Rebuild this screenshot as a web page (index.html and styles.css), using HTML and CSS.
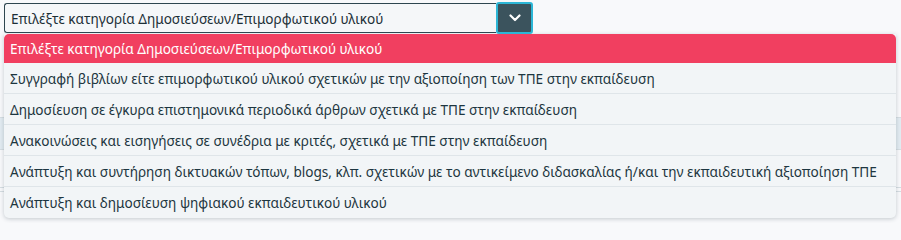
FILE: index.html
```html
<!DOCTYPE html>
<html lang="el">
<head>
<meta charset="utf-8">
<link rel="stylesheet" href="styles.css">
</head>
<body>
<div class="page">
  <div class="backdrop">
    <div class="bg-line l1"></div>
    <div class="bg-row r1"></div>
    <div class="bg-line l2"></div>
    <div class="bg-line l3"></div>
    <div class="bg-line l4"></div>
  </div>
  <div class="picker">
    <div class="control">
      <div class="select">Επιλέξτε κατηγορία Δημοσιεύσεων/Επιμορφωτικού υλικού</div>
      <button class="toggle" type="button" aria-label="toggle">
        <svg width="12" height="8" viewBox="0 0 12 8"><path d="M1.5 1.5 L6 6 L10.5 1.5" fill="none" stroke="#fff" stroke-width="2.2" stroke-linecap="round" stroke-linejoin="round"/></svg>
      </button>
    </div>
    <ul class="menu">
      <li class="item active">Επιλέξτε κατηγορία Δημοσιεύσεων/Επιμορφωτικού υλικού</li>
      <li class="item">Συγγραφή βιβλίων είτε επιμορφωτικού υλικού σχετικών με την αξιοποίηση των ΤΠΕ στην εκπαίδευση</li>
      <li class="item">Δημοσίευση σε έγκυρα επιστημονικά περιοδικά άρθρων σχετικά με ΤΠΕ στην εκπαίδευση</li>
      <li class="item">Ανακοινώσεις και εισηγήσεις σε συνέδρια με κριτές, σχετικά με ΤΠΕ στην εκπαίδευση</li>
      <li class="item">Ανάπτυξη και συντήρηση δικτυακών τόπων, blogs, κλπ. σχετικών με το αντικείμενο διδασκαλίας ή/και την εκπαιδευτική αξιοποίηση ΤΠΕ</li>
      <li class="item">Ανάπτυξη και δημοσίευση ψηφιακού εκπαιδευτικού υλικού</li>
    </ul>
  </div>
</div>
</body>
</html>
```

FILE: styles.css
```css
* { box-sizing: border-box; }
html, body { margin: 0; padding: 0; }
body {
  background: #f8f9fb;
  font-family: "Noto Sans", "Open Sans", sans-serif;
  color: #1f3a44;
  width: 901px;
  height: 223px;
  overflow: hidden;
}
.page {
  position: relative;
  width: 901px;
  height: 223px;
}
.backdrop {
  position: absolute;
  left: 0; top: 0; right: 0; bottom: 0;
}
.bg-line {
  position: absolute;
  left: 0; right: 0;
  height: 1px;
  background: #d5dde2;
}
.l1 { top: 117px; }
.l2 { top: 149px; }
.l3 { top: 187px; }
.l4 { top: 191px; }
.bg-row {
  position: absolute;
  left: 0; right: 0;
  top: 118px;
  height: 31px;
  background: #e2ebf1;
}
.picker {
  position: relative;
  padding: 2px 5px 0 4px;
}
.control {
  display: flex;
  align-items: center;
  width: 529px;
}
.select {
  width: 492px;
  height: 30px;
  border: 1px solid #2e4650;
  border-right: none;
  border-radius: 3px 0 0 3px;
  background: #f5f7f9;
  font-size: 13.6px;
  line-height: 29px;
  padding-left: 6px;
  color: #1c2f37;
  white-space: nowrap;
}
.toggle {
  width: 37px;
  height: 32px;
  margin: 0;
  padding: 0;
  background: #3b535d;
  border: 2px solid #2cb6d6;
  border-radius: 3px;
  display: flex;
  align-items: center;
  justify-content: center;
}
.menu {
  list-style: none;
  margin: 0;
  padding: 0;
  width: 892px;
  background: #f2f5f7;
  border-radius: 0 0 5px 5px;
  box-shadow: 0 1px 4px rgba(40, 60, 70, 0.25);
  overflow: hidden;
}
.item {
  height: 31px;
  line-height: 31px;
  padding-left: 6px;
  font-size: 13.6px;
  color: #1d3640;
  border-bottom: 1px solid #dfe5e9;
  white-space: nowrap;
}
.item:last-child { border-bottom: none; }
.item.active {
  background: #f13f60;
  color: #ffffff;
  height: 29px;
  line-height: 30px;
  border-bottom: none;
  border-radius: 5px 5px 0 0;
}
```
